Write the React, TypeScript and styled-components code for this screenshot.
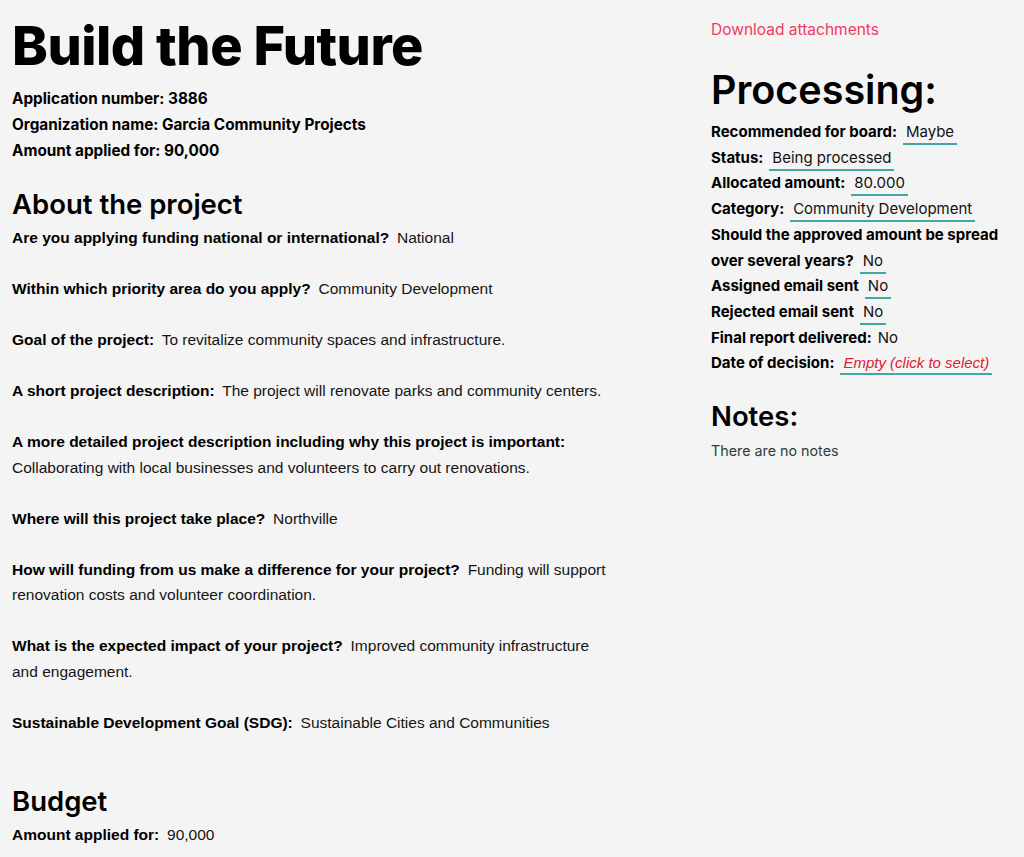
import styled, { createGlobalStyle } from "styled-components";

const GlobalStyle = createGlobalStyle`
  html, body {
    margin: 0;
    padding: 0;
    background: #f4f4f4;
  }
  body {
    font-family: Inter, "Liberation Sans", sans-serif;
    color: #000;
  }
`;

const Page = styled.div`
  display: grid;
  grid-template-columns: 600px 1fr;
  column-gap: 99px;
  padding: 0 12px;
  min-height: 857px;
`;

const Main = styled.div`
  display: flex;
  flex-direction: column;
`;

const Side = styled.div`
  display: flex;
  flex-direction: column;
  padding-top: 19px;
`;

const Title = styled.h1`
  font-size: 54px;
  font-weight: 800;
  letter-spacing: -0.5px;
  line-height: 1;
  margin: 19px 0 13px;
`;

const InfoLine = styled.div`
  font-size: 15.3px;
  font-weight: 700;
  line-height: 26px;
`;

const SectionTitle = styled.h2`
  font-size: 27.5px;
  font-weight: 600;
  line-height: 32px;
  margin: 24px 0 5px;
`;

const QA = styled.p`
  margin: 0 0 25.5px;
  font-size: 15.5px;
  line-height: 25.5px;
  font-family: "Liberation Sans", Arial, sans-serif;
`;

const Question = styled.span`
  font-weight: 700;
  margin-right: 3.5px;
`;

const Answer = styled.span`
  color: #151515;
`;

const Link = styled.a`
  color: #f23a5d;
  font-size: 15.5px;
  text-decoration: none;
  line-height: 22px;
  cursor: pointer;
`;

const SideTitle = styled.h2`
  font-size: 39.5px;
  font-weight: 600;
  line-height: 46px;
  margin: 26px 0 6px;
`;

const Row = styled.div`
  font-size: 15px;
  line-height: 25.7px;
`;

const RowLabel = styled.span`
  font-weight: 700;
  margin-right: 6px;
`;

const Editable = styled.span<{ $empty?: boolean }>`
  padding: 0 3px 2px;
  border-bottom: 2px solid #3fa9a1;
  color: ${(p) => (p.$empty ? "#e0202e" : "#111")};
  font-style: ${(p) => (p.$empty ? "italic" : "normal")};
  font-family: ${(p) =>
    p.$empty ? '"Liberation Sans", Arial, sans-serif' : "inherit"};
  cursor: pointer;
`;

const Plain = styled.span`
  color: #111;
`;

const NotesText = styled.div`
  font-size: 14.3px;
  line-height: 22px;
  margin-top: 3px;
  color: #2e3d3b;
`;

const questions: [string, string][] = [
  ["Are you applying funding national or international?", "National"],
  ["Within which priority area do you apply?", "Community Development"],
  ["Goal of the project:", "To revitalize community spaces and infrastructure."],
  ["A short project description:", "The project will renovate parks and community centers."],
  [
    "A more detailed project description including why this project is important:",
    "Collaborating with local businesses and volunteers to carry out renovations.",
  ],
  ["Where will this project take place?", "Northville"],
  [
    "How will funding from us make a difference for your project?",
    "Funding will support renovation costs and volunteer coordination.",
  ],
  [
    "What is the expected impact of your project?",
    "Improved community infrastructure and engagement.",
  ],
  ["Sustainable Development Goal (SDG):", "Sustainable Cities and Communities"],
];

const App = () => {
  return (
    <>
      <GlobalStyle />
      <Page>
        <Main>
          <Title>Build the Future</Title>
          <InfoLine>Application number: 3886</InfoLine>
          <InfoLine>Organization name: Garcia Community Projects</InfoLine>
          <InfoLine>Amount applied for: 90,000</InfoLine>

          <SectionTitle>About the project</SectionTitle>
          {questions.map(([q, a]) => (
            <QA key={q}>
              <Question>{q}</Question> <Answer>{a}</Answer>
            </QA>
          ))}

          <SectionTitle>Budget</SectionTitle>
          <QA>
            <Question>Amount applied for:</Question> <Answer>90,000</Answer>
          </QA>
        </Main>

        <Side>
          <Link>Download attachments</Link>
          <SideTitle>Processing:</SideTitle>
          <Row>
            <RowLabel>Recommended for board:</RowLabel>
            <Editable>Maybe</Editable>
          </Row>
          <Row>
            <RowLabel>Status:</RowLabel>
            <Editable>Being processed</Editable>
          </Row>
          <Row>
            <RowLabel>Allocated amount:</RowLabel>
            <Editable>80.000</Editable>
          </Row>
          <Row>
            <RowLabel>Category:</RowLabel>
            <Editable>Community Development</Editable>
          </Row>
          <Row>
            <RowLabel>Should the approved amount be spread over several years?</RowLabel>
            <Editable>No</Editable>
          </Row>
          <Row>
            <RowLabel>Assigned email sent</RowLabel>
            <Editable>No</Editable>
          </Row>
          <Row>
            <RowLabel>Rejected email sent</RowLabel>
            <Editable>No</Editable>
          </Row>
          <Row>
            <RowLabel>Final report delivered:</RowLabel>
            <Plain>No</Plain>
          </Row>
          <Row>
            <RowLabel>Date of decision:</RowLabel>
            <Editable $empty>Empty (click to select)</Editable>
          </Row>
          <SectionTitle>Notes:</SectionTitle>
          <NotesText>There are no notes</NotesText>
        </Side>
      </Page>
    </>
  );
};

export default App;
